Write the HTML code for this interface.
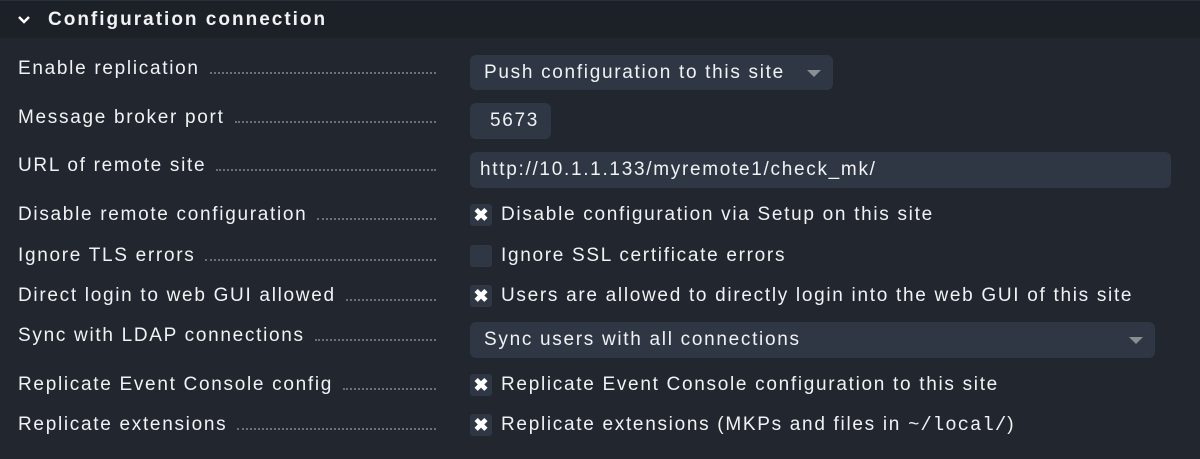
<!DOCTYPE html>
<html><head><meta charset="utf-8"><style>
body{margin:0;width:1200px;height:459px;background:#22272f;font-family:"Liberation Sans",sans-serif;color:#f0f2f4;overflow:hidden;position:relative;letter-spacing:1.7px}
.hd{position:absolute;left:0;top:0;width:1200px;height:37px;background:#1c2027;border-top:1px solid #2a3039}
.hd span{position:absolute;left:48px;top:8px;font-size:19px;font-weight:bold;letter-spacing:2px}
.hd svg{position:absolute;left:17px;top:14px}
.lb{position:absolute;left:18px;width:418px;font-size:19px;display:flex;align-items:center;height:24px;white-space:nowrap}
.lb i{flex:1;margin-left:10px;border-bottom:2px dotted #6b717a;height:0;margin-top:8px}
.in{position:absolute;left:470px;background:#2f3744;border-radius:6px;font-size:19px;display:flex;align-items:center;padding-left:14px;box-sizing:border-box}
.ar{position:absolute;right:12px;top:15px;width:0;height:0;border-left:7px solid transparent;border-right:7px solid transparent;border-top:7px solid #8a8f96}
.cb{position:absolute;left:470px;font-size:19px;display:flex;align-items:center;height:24px;white-space:nowrap}
.cb b{width:22px;height:22px;background:#2f3744;border-radius:3px;margin-right:9px;display:flex;align-items:center;justify-content:center;font-size:18px;color:#fff;letter-spacing:0}
.mono{font-family:'Liberation Mono',monospace;letter-spacing:1px}
</style></head><body>
<div class="hd"><svg width="14" height="10" viewBox="0 0 14 10"><path d="M2 2 L7 7 L12 2" stroke="#fff" stroke-width="2.5" fill="none"/></svg><span>Configuration connection</span></div>
<div class="lb" style="top:57px">Enable replication<i></i></div>
<div class="in" style="top:55px;width:363px;height:35px">Push configuration to this site<div class="ar"></div></div>
<div class="lb" style="top:106px">Message broker port<i></i></div>
<div class="in" style="top:103px;width:81px;height:36px;padding-left:20px">5673</div>
<div class="lb" style="top:154px">URL of remote site<i></i></div>
<div class="in" style="top:152px;width:701px;height:36px;padding-left:10px">http://10.1.1.133/myremote1/check_mk/</div>
<div class="lb" style="top:203px">Disable remote configuration<i></i></div>
<div class="cb" style="top:203px"><b>✖</b>Disable configuration via Setup on this site</div>
<div class="lb" style="top:244px">Ignore TLS errors<i></i></div>
<div class="cb" style="top:244px"><b></b>Ignore SSL certificate errors</div>
<div class="lb" style="top:284px">Direct login to web GUI allowed<i></i></div>
<div class="cb" style="top:284px"><b>✖</b>Users are allowed to directly login into the web GUI of this site</div>
<div class="lb" style="top:324px">Sync with LDAP connections<i></i></div>
<div class="in" style="top:322px;width:685px;height:36px">Sync users with all connections<div class="ar"></div></div>
<div class="lb" style="top:373px">Replicate Event Console config<i></i></div>
<div class="cb" style="top:373px"><b>✖</b>Replicate Event Console configuration to this site</div>
<div class="lb" style="top:413px">Replicate extensions<i></i></div>
<div class="cb" style="top:413px"><b>✖</b>Replicate extensions (MKPs and files in&nbsp;<span class="mono">~/local/</span>)</div>
</body></html>
